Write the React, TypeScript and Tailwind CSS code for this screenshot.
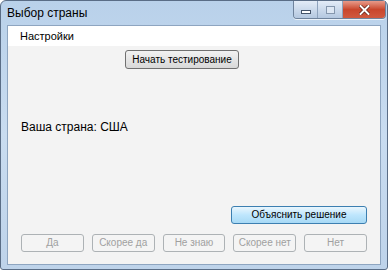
import React from 'react';

const answers = ['Да', 'Скорее да', 'Не знаю', 'Скорее нет', 'Нет'];

const App: React.FC = () => {
    return (
        <div className="w-[390px] h-[272px] bg-white font-['Liberation_Sans',Arial,sans-serif]">
            <div className="w-[388px] h-[270px] rounded-t-[6px] rounded-b-[3px] border border-[#5a6d86] bg-gradient-to-b from-[#b9d1ea] via-[#c9dcf0] to-[#bed3ea] flex flex-col">
                {/* Title bar */}
                <div className="h-[24px] flex items-start justify-between">
                    <span className="pl-[6px] pt-[5px] text-[12px] text-black leading-[14px]">Выбор страны</span>
                    <div className="flex mr-[1px] h-[18px] rounded-b-[4px] border border-t-0 border-[#6f839c] overflow-hidden shadow-[0_1px_0_rgba(255,255,255,0.7)]">
                        <div className="w-[24px] bg-gradient-to-b from-[#e3ecf7] to-[#b4c8e0] border-r border-[#8ea3bd] flex items-center justify-center">
                            <div className="w-[10px] h-[4px] mt-[5px] bg-white border border-[#44546a]"></div>
                        </div>
                        <div className="w-[25px] bg-gradient-to-b from-[#e3ecf7] to-[#b4c8e0] border-r border-[#8ea3bd] flex items-center justify-center">
                            <div className="w-[9px] h-[8px] border border-[#8597ad] bg-[#dde7f3]"></div>
                        </div>
                        <div className="w-[42px] bg-gradient-to-b from-[#e79a8a] via-[#c9462c] to-[#d0593f] flex items-center justify-center">
                            <svg width="11" height="10" viewBox="0 0 11 10">
                                <path d="M1.5 1 L9.5 9 M9.5 1 L1.5 9" stroke="#5a1a10" strokeWidth="3.4" strokeLinecap="square" />
                                <path d="M1.5 1 L9.5 9 M9.5 1 L1.5 9" stroke="#ffffff" strokeWidth="2" strokeLinecap="square" />
                            </svg>
                        </div>
                    </div>
                </div>

                {/* Client area */}
                <div className="mx-[6px] h-[240px] border border-[#8ea5c0] bg-[#f3f3f3] flex flex-col">
                    <div className="h-[20px] bg-white flex items-center pl-[12px] text-[11px] text-black">Настройки</div>
                    <div className="flex-1 flex flex-col px-[13px]">
                        <button className="mt-[4px] ml-[104px] w-[114px] h-[19px] rounded-[3px] border border-[#707070] bg-gradient-to-b from-[#f2f2f2] to-[#d8d8d8] text-[10px] text-black leading-none">
                            Начать тестирование
                        </button>
                        <p className="mt-[51px] text-[12px] text-black leading-[15px]">Ваша страна: США</p>
                        <div className="flex-1"></div>
                        <div className="flex justify-end">
                            <button className="w-[136px] h-[18px] rounded-[3px] border border-[#3c7fb1] bg-gradient-to-b from-[#eaf6fd] via-[#bee6fd] to-[#a7d9f5] text-[10px] text-black leading-none">
                                Объяснить решение
                            </button>
                        </div>
                        <div className="mt-[10px] mb-[12px] flex gap-[8px]">
                            {answers.map((a) => (
                                <button key={a} className="w-[63px] h-[18px] rounded-[3px] border border-[#adb2b5] bg-[#f4f4f4] text-[10px] text-[#a0a0a0] leading-none">
                                    {a}
                                </button>
                            ))}
                        </div>
                    </div>
                </div>
            </div>
        </div>
    );
};

export default App;
